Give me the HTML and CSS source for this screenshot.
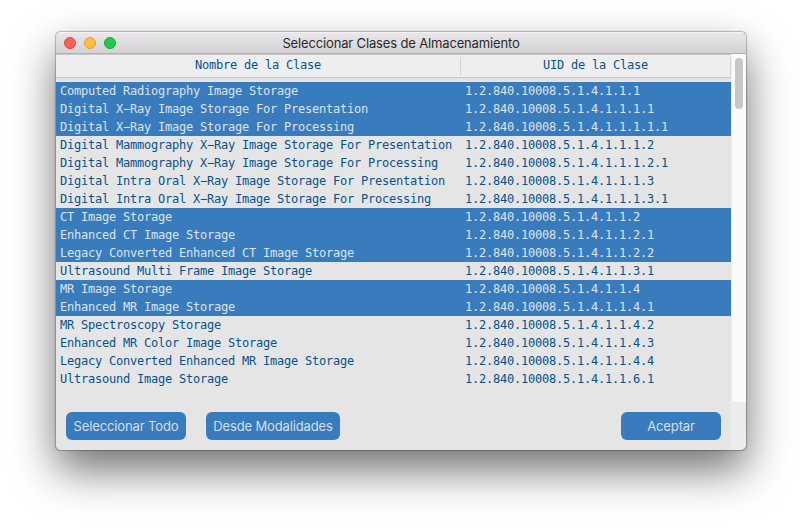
FILE: index.html
```
<!DOCTYPE html>
<html lang="es">
<head>
<meta charset="utf-8">
<title>Seleccionar Clases de Almacenamiento</title>
<link rel="stylesheet" href="styles.css">
</head>
<body>
<div class="window">
  <div class="titlebar">
    <div class="lights"><i class="close"></i><i class="minimize"></i><i class="maximize"></i></div>
    <span class="title">Seleccionar Clases de Almacenamiento</span>
  </div>
  <div class="content">
    <div class="table">
      <div class="head"><span class="name">Nombre de la Clase</span><span class="uid">UID de la Clase</span></div>
      <div class="rows">
        <div class="row selected"><span>Computed Radiography Image Storage</span><span>1.2.840.10008.5.1.4.1.1.1</span></div>
        <div class="row selected"><span>Digital X−Ray Image Storage For Presentation</span><span>1.2.840.10008.5.1.4.1.1.1.1</span></div>
        <div class="row selected"><span>Digital X−Ray Image Storage For Processing</span><span>1.2.840.10008.5.1.4.1.1.1.1.1</span></div>
        <div class="row"><span>Digital Mammography X−Ray Image Storage For Presentation</span><span>1.2.840.10008.5.1.4.1.1.1.2</span></div>
        <div class="row"><span>Digital Mammography X−Ray Image Storage For Processing</span><span>1.2.840.10008.5.1.4.1.1.1.2.1</span></div>
        <div class="row"><span>Digital Intra Oral X−Ray Image Storage For Presentation</span><span>1.2.840.10008.5.1.4.1.1.1.3</span></div>
        <div class="row"><span>Digital Intra Oral X−Ray Image Storage For Processing</span><span>1.2.840.10008.5.1.4.1.1.1.3.1</span></div>
        <div class="row selected"><span>CT Image Storage</span><span>1.2.840.10008.5.1.4.1.1.2</span></div>
        <div class="row selected"><span>Enhanced CT Image Storage</span><span>1.2.840.10008.5.1.4.1.1.2.1</span></div>
        <div class="row selected"><span>Legacy Converted Enhanced CT Image Storage</span><span>1.2.840.10008.5.1.4.1.1.2.2</span></div>
        <div class="row"><span>Ultrasound Multi Frame Image Storage</span><span>1.2.840.10008.5.1.4.1.1.3.1</span></div>
        <div class="row selected"><span>MR Image Storage</span><span>1.2.840.10008.5.1.4.1.1.4</span></div>
        <div class="row selected"><span>Enhanced MR Image Storage</span><span>1.2.840.10008.5.1.4.1.1.4.1</span></div>
        <div class="row"><span>MR Spectroscopy Storage</span><span>1.2.840.10008.5.1.4.1.1.4.2</span></div>
        <div class="row"><span>Enhanced MR Color Image Storage</span><span>1.2.840.10008.5.1.4.1.1.4.3</span></div>
        <div class="row"><span>Legacy Converted Enhanced MR Image Storage</span><span>1.2.840.10008.5.1.4.1.1.4.4</span></div>
        <div class="row"><span>Ultrasound Image Storage</span><span>1.2.840.10008.5.1.4.1.1.6.1</span></div>
      </div>
    </div>
    <div class="scrollbar"><div class="thumb"></div></div>
  </div>
  <div class="footer">
    <div class="actions">
      <button class="all">Seleccionar Todo</button>
      <button class="modalities">Desde Modalidades</button>
      <button class="accept">Aceptar</button>
    </div>
  </div>
</div>
</body>
</html>
```
FILE: styles.css
```
* { box-sizing: border-box; }
body { margin: 0; padding: 32px 56px; height: 530px; overflow: hidden; background: #fff; }
.window {
  width: 690px; height: 418px; display: flex; flex-direction: column;
  border-radius: 5px; overflow: hidden; background: #ececec;
  box-shadow: 0 0 1px 0.5px rgba(0,0,0,.25), 0 20px 44px rgba(0,0,0,.56);
}
.titlebar {
  height: 22px; flex: none; display: grid; grid-template-columns: 64px 1fr 64px; align-items: center;
  background: linear-gradient(#e9e7e9, #d3d1d3); border-top: 1px solid #f5f4f5; border-bottom: 1px solid #b3b1b3;
}
.lights { display: flex; gap: 8px; padding-left: 8px; }
.lights i { width: 12px; height: 12px; border-radius: 50%; border: 1px solid; }
.close { background: #ff5f57; border-color: #e2463f !important; }
.minimize { background: #ffbe3d; border-color: #dfa033 !important; }
.maximize { background: #1fcb48; border-color: #18ac35 !important; }
.title { text-align: center; font: 13px/20px Inter, sans-serif; letter-spacing: -.15px; color: #2b2b2b; white-space: nowrap; }
.content { height: 348px; flex: none; display: flex; }
.table { width: 675px; background: #e5e5e5; font: 12px/18px "DejaVu Sans Mono", monospace; letter-spacing: -.2246px; color: #07528f; white-space: nowrap; }
.head { height: 24px; display: flex; background: #eee; border-top: 1px solid #c8c8c8; border-bottom: 1px solid #c6c6c6; padding-top: 2px; }
.head span { height: 18px; text-align: center; border-right: 1px solid #d2d2d2; line-height: 17px; }
.name { width: 405px; }
.uid { width: 270px; }
.rows { padding-top: 4px; }
.row { display: grid; grid-template-columns: 405px 1fr; height: 18px; padding-left: 4px; }
.selected { background: #387cbd; color: #dce3ea; }
.scrollbar { width: 15px; background: #fafafa; border-left: 1px solid #ededed; padding: 4px 3px; }
.thumb { width: 8px; height: 51px; border-radius: 4px; background: #c7c7c7; }
.footer { height: 48px; flex: none; }
.actions { width: 674px; height: 48px; display: flex; padding: 10px 9px 10px 10px; background: #e5e5e5; border-radius: 4px; }
button { height: 28px; padding: 0; border: 0; border-radius: 6px; background: #387cbd; color: #d5dfe9; font: 13px/28px Inter, sans-serif; letter-spacing: -.13px; white-space: nowrap; }
.all { width: 120px; }
.modalities { width: 134px; margin-left: 20px; }
.accept { width: 100px; margin-left: auto; }
```
